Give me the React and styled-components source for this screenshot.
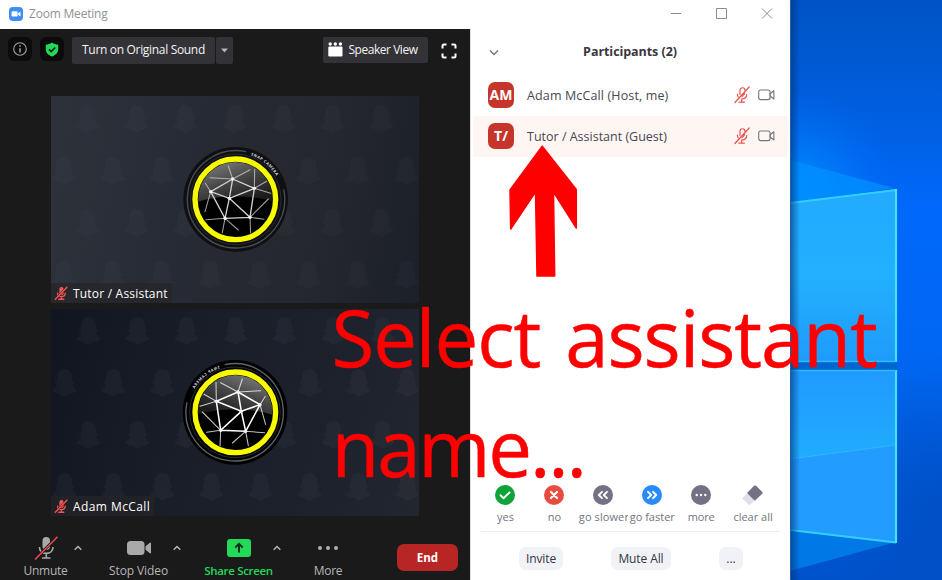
import React from "react";
import styled, { createGlobalStyle } from "styled-components";

const Global = createGlobalStyle`
  * { box-sizing: border-box; }
  body { margin: 0; overflow: hidden; background: #fff; }
  body, button { font-family: "Open Sans", "Noto Sans", sans-serif; }
  button { border: 0; padding: 0; margin: 0; background: none; color: inherit; }
  svg { display: block; flex: none; }
`;

const Desktop = styled.div`
  position: relative;
  display: flex;
  width: 942px;
  height: 580px;
  overflow: hidden;
`;

const Text = styled.span`
  font-size: ${(p) => p.$size || 12}px;
  font-weight: ${(p) => p.$weight || 400};
  letter-spacing: ${(p) => p.$spacing || 0}px;
  line-height: 16px;
  white-space: nowrap;
`;

const AppWindow = styled.div`
  display: flex;
  flex-direction: column;
  width: 790px;
  height: 580px;
  background: #fff;
`;

const TitleBar = styled.header`
  display: flex;
  align-items: center;
  height: 29px;
  padding: 0 17px 2px 9px;
  gap: 6px;
  color: #929292;
`;

const WindowControls = styled.div`
  display: flex;
  align-items: center;
  gap: 34px;
  margin-left: auto;
`;

const Body = styled.div`
  display: flex;
  flex: 1;
`;

const MeetingPane = styled.section`
  display: flex;
  flex-direction: column;
  width: 470px;
  background: #1a1a1a;
`;

const MeetingTop = styled.div`
  display: flex;
  align-items: flex-start;
  height: 67px;
  padding: 8px 12px 0 8px;
  color: #f2f2f2;
`;

const SquareButton = styled.button`
  display: grid;
  place-items: center;
  width: 24px;
  height: 24px;
  margin-right: 8px;
  border-radius: 6px;
  background: #0b0b0b;
`;

const GreyButton = styled.button`
  display: flex;
  align-items: center;
  justify-content: center;
  width: ${(p) => p.$width}px;
  height: ${(p) => p.$height || 27}px;
  margin-right: ${(p) => p.$after || 0}px;
  padding: 0 ${(p) => p.$shift || 0}px 1px 0;
  gap: 5px;
  border-radius: 2px;
  background: #323237;
  color: #f4f4f4;
`;

const TopRight = styled.div`
  display: flex;
  align-items: flex-start;
  margin-left: auto;
`;

const FullScreen = styled.button`
  display: grid;
  place-items: center;
  width: 18px;
  height: 28px;
`;

const Videos = styled.div`
  display: flex;
  flex-direction: column;
  gap: 6px;
  padding-left: 51px;
`;

const Tile = styled.div`
  position: relative;
  width: 368px;
  height: 207px;
  background: ${(p) =>
    p.$dark
      ? "linear-gradient(105deg, #10151f 0%, #191e29 40%, #1c212c 70%, #22262f 100%)"
      : "linear-gradient(100deg, #2e323b 0%, #272b35 35%, #25272e 72%, #1b2029 100%)"};
`;

const NameTag = styled.div`
  position: absolute;
  left: 0;
  bottom: 0;
  display: flex;
  align-items: center;
  gap: 5px;
  width: ${(p) => p.$width}px;
  height: 20px;
  padding: 1px 0 0 3px;
  background: rgba(38, 38, 40, 0.72);
  color: #fff;
`;

const Controls = styled.div`
  display: flex;
  align-items: flex-start;
  height: 64px;
  padding: 20px 0 0 20px;
`;

const ControlGroup = styled.div`
  display: flex;
  align-items: flex-start;
  margin-right: ${(p) => p.$after}px;
`;

const Control = styled.button`
  display: flex;
  flex-direction: column;
  align-items: center;
  gap: 3px;
  width: ${(p) => p.$width}px;
  color: ${(p) => (p.$green ? "#23d959" : "#b6b6b6")};
`;

const Caret = styled.button`
  display: flex;
  justify-content: center;
  width: ${(p) => p.$width}px;
  padding-top: 9px;
`;

const EndButton = styled.button`
  width: 61px;
  height: 27px;
  margin: 8px 12px 0 auto;
  padding-bottom: 2px;
  border-radius: 7px;
  background: #b82525;
  color: #fff;
`;

const Panel = styled.aside`
  display: flex;
  flex-direction: column;
  width: 320px;
  border-left: 1px solid #dedee2;
  background: #fff;
  color: #47474f;
`;

const PanelHeader = styled.div`
  display: grid;
  grid-template-columns: 46px 1fr 47px;
  align-items: center;
  height: 46px;
  justify-items: center;
  color: #37373d;
`;

const Row = styled.div`
  display: flex;
  align-items: center;
  height: 41px;
  margin: 0 2px;
  padding: 0 13px 0 15px;
  background: ${(p) => (p.$active ? "#fff6f3" : "#fff")};
`;

const Avatar = styled.div`
  display: grid;
  place-items: center;
  width: 26px;
  height: 26px;
  margin: 0 13px 2px 0;
  border-radius: 7px;
  background: #c5352b;
  color: #fff;
`;

const RowIcons = styled.div`
  display: flex;
  align-items: center;
  gap: 8px;
  margin: 0 0 2px auto;
`;

const Reactions = styled.div`
  display: flex;
  height: 47px;
  margin: auto 10px 0 9.5px;
  border-bottom: 1px solid #ededf1;
  color: #747482;
`;

const Reaction = styled.button`
  display: flex;
  flex-direction: column;
  align-items: center;
  gap: 4px;
  width: ${(p) => p.$width || 49}px;
`;

const ReactionLabel = styled(Text)`
  max-width: 50px;
  padding-left: 1px;
  overflow: hidden;
`;

const PanelFooter = styled.div`
  display: flex;
  height: 48px;
  padding: 15px 47px 0 48px;
  justify-content: space-between;
`;

const FooterButton = styled.button`
  display: flex;
  justify-content: center;
  align-items: center;
  width: ${(p) => p.$width}px;
  height: 23px;
  border-radius: 7px;
  background: #f1f2f7;
  color: #35353d;
`;

const Annotation = styled.div`
  position: absolute;
  left: 331.5px;
  top: 282px;
  display: flex;
  flex-direction: column;
  color: #f00;
  pointer-events: none;
`;

const AnnotationLine = styled.span`
  font-size: 78px;
  line-height: 110px;
  letter-spacing: ${(p) => p.$spacing}px;
  word-spacing: 6px;
  white-space: nowrap;
  -webkit-text-stroke: 0.5px #f00;
`;

const Arrow = styled.svg`
  position: absolute;
  left: 507px;
  top: 143.5px;
`;

const MutedLine = () => (
  <svg width="16" height="18" viewBox="0 0 16 18" fill="none" stroke="#e5534c" strokeWidth="1.2" strokeLinecap="round">
    <path d="M6 8.500V4.300C6 .900 11 .900 11 4.300M10.700 7.500 8 10.500" />
    <path d="M3.400 8c0 1.300.3 2.200.9 3M12.700 8.500c0 2.600-2 4.300-5 4.500v3M5 16.200h5.400" />
    <path d="M15.200 1 .900 16.500" />
  </svg>
);

const CameraLine = () => (
  <svg width="17" height="12" viewBox="0 0 17 12" fill="none" stroke="#74747f" strokeWidth="1.1" strokeLinejoin="round">
    <rect x=".7" y="1" width="11.4" height="9.6" rx="2" />
    <path d="m12.100 4.800 3.800-3v8.200l-3.800-3z" />
  </svg>
);

const MutedSolid = () => (
  <svg width="14" height="15" viewBox="0 0 14 15" fill="none" stroke="#f25555" strokeLinecap="round">
    <path d="M7.500 3v4.200" strokeWidth="4.200" />
    <path d="M3.600 7.200c0 2 1.400 3.400 3.800 3.400S11.200 9.200 11.200 7.200M7.400 10.800V13M4.800 13.300h5" strokeWidth="1.400" />
    <path d="M12.900 1.300 1.300 13.300" stroke="#3a2326" strokeWidth="2" />
    <path d="M12.900 1.300 1.300 13.300" strokeWidth="1.300" />
  </svg>
);

const CaretUp = () => (
  <svg width="8" height="6" viewBox="0 0 8 6" fill="none" stroke="#b5b5b5" strokeWidth="1.500">
    <path d="M.7 4.700 4 1.500l3.300 3.200" />
  </svg>
);

const spokes = [
  "M218 147 205 108", "M218 147 270 119", "M218 147 150 143", "M152 185 136 160", "M152 185 135 245",
  "M283 175 284 118", "M283 175 332 190", "M283 175 320 154", "M270 262 325 207", "M270 262 312 268",
  "M195 265 138 269", "M195 265 187 308", "M195 265 235 300", "M270 262 272 312",
];

const nodes = [[218, 147], [152, 185], [283, 175], [208, 205], [195, 265], [270, 262]];

const edges =
  "M218 147 152 185 208 205ZM218 147 283 175 208 205M152 185 195 265 208 205 270 262 283 175M195 265 270 262";

function Lens({ id, transform, dim }) {
  return (
    <g transform={transform}>
      <defs>
        <linearGradient id={`${id}-glass`} x1=".25" y1="0" x2=".6" y2="1">
          <stop offset="0" stopColor="#7a7a7a" />
          <stop offset=".3" stopColor="#454545" />
          <stop offset=".6" stopColor="#1c1c1c" />
        </linearGradient>
        <clipPath id={`${id}-clip`}><circle cx="226" cy="208" r="112" /></clipPath>
      </defs>
      <circle cx="227" cy="208" r="157" fill={dim ? "#0f1013" : "#020203"} />
      <path d="M258 65A146 146 0 1 0 371 178" fill="none" stroke={dim ? "#4b4d50" : "#606468"} strokeWidth="4" />
      <circle cx="227" cy="208" r="136" fill="none" stroke="#292a2c" strokeWidth="3" />
      <g clipPath={`url(#${id}-clip)`}>
        <circle cx="226" cy="208" r="112" fill={`url(#${id}-glass)`} />
        <path d="M100 222C150 196 275 190 350 218V340H100Z" fill="#000" />
        <g fill="none" stroke={dim ? "#d0d0d0" : "#fff"} strokeLinecap="round">
          <path d={edges} strokeWidth={dim ? 4 : 4.6} />
          {spokes.map((d) => <path key={d} d={d} strokeWidth="3.200" opacity=".75" />)}
        </g>
        {nodes.map(([x, y]) => <circle key={x} cx={x} cy={y} r="5" fill="#f5f5f5" />)}
      </g>
      <circle cx="226" cy="208" r="121" fill="none" stroke="#f8fa00" strokeWidth="16" />
      <path id={`${id}-arc`} d="M272 76A140 140 0 0 1 361 166" fill="none" />
      <text fontFamily="Open Sans" fontWeight="700" fontSize="12" letterSpacing="1.500" fill="#d5d5d5">
        <textPath href={`#${id}-arc`}>SNAP CAMERA</textPath>
      </text>
    </g>
  );
}

function Snapshot({ id, dim, transform }) {
  return (
    <svg width="368" height="207" viewBox="0 0 368 207">
      <defs>
        <path
          id={`${id}-ghost`}
          fill={dim ? "#8c93ad" : "#a9a2ad"}
          d="M12.500 0c4.700 0 7.500 3.700 7.500 8.600v3.700c1 .9 2.500.2 2.300 1.300-.2 1-2 1.300-2 2.300 0 1.900 2.200 4.400 4.200 5.200.8.400-.4 2-2.800 2.300-.7 1.800-2.700.4-4.500 1.400-1.500.9-2.500 2.700-4.700 2.700s-3.200-1.800-4.700-2.700c-1.800-1-3.800.4-4.500-1.400C1 23.100-.3 21.500.5 21.100c2-.8 4.200-3.300 4.200-5.200 0-1-1.800-1.300-2-2.300-.2-1.100 1.300-.4 2.300-1.300V8.600C5 3.700 7.800 0 12.500 0Z"
        />
        <pattern id={`${id}-ghosts`} width="49" height="104" patternUnits="userSpaceOnUse" x={dim ? 21 : 22} y={dim ? 9 : 8}>
          <use href={`#${id}-ghost`} x="3" y="0" />
          <use href={`#${id}-ghost`} x="28" y="52" />
          <use href={`#${id}-ghost`} x="-21" y="52" />
        </pattern>
      </defs>
      <rect width="368" height="207" fill={`url(#${id}-ghosts)`} opacity={dim ? 0.035 : 0.05} />
      <Lens id={id} dim={dim} transform={transform} />
    </svg>
  );
}

const Wallpaper = () => (
  <svg width="152" height="580" viewBox="0 0 152 580">
    <defs>
      <linearGradient id="sky" x1="0" y1="0" x2="0" y2="1">
        <stop offset="0" stopColor="#0053c4" />
        <stop offset=".2" stopColor="#005fe0" />
        <stop offset=".36" stopColor="#0068fb" />
        <stop offset=".6" stopColor="#0067f4" />
        <stop offset=".8" stopColor="#005bdc" />
        <stop offset="1" stopColor="#0052cb" />
      </linearGradient>
      <linearGradient id="pane" x1="0" y1="0" x2="0" y2="1">
        <stop offset="0" stopColor="#22aaff" />
        <stop offset=".5" stopColor="#22b0ff" />
        <stop offset="1" stopColor="#1f9bfb" />
      </linearGradient>
      <linearGradient id="paneLow" x1="0" y1="0" x2="0" y2="1">
        <stop offset="0" stopColor="#209aff" />
        <stop offset=".5" stopColor="#20acff" />
      </linearGradient>
      <radialGradient id="halo" gradientUnits="userSpaceOnUse" cx="0" cy="195" r="110">
        <stop offset="0" stopColor="#009cff" stopOpacity=".9" />
        <stop offset="1" stopColor="#0070ff" stopOpacity="0" />
      </radialGradient>
      <radialGradient id="shade" gradientUnits="userSpaceOnUse" cx="152" cy="500" r="130">
        <stop offset="0" stopColor="#0048b4" stopOpacity=".45" />
        <stop offset="1" stopColor="#0048b4" stopOpacity="0" />
      </radialGradient>
      <linearGradient id="edge" x1="0" x2="1">
        <stop offset="0" stopColor="#00337a" stopOpacity=".65" />
        <stop offset="1" stopColor="#00337a" stopOpacity="0" />
      </linearGradient>
    </defs>
    <rect width="152" height="580" fill="url(#sky)" />
    <rect width="152" height="580" fill="url(#halo)" />
    <rect width="152" height="580" fill="url(#shade)" />
    <path d="M0 160 104 188 0 204Z" fill="#008eff" opacity=".8" />
    <path d="M0 529 106 542 0 571Z" fill="#0084ed" opacity=".75" />
    <path d="M0 362H107V370H0Z" fill="#0065cf" />
    <path d="M0 203 107 189V362H0Z" fill="url(#pane)" />
    <path d="M0 370H107V543L0 529Z" fill="url(#paneLow)" />
    <path d="M0 459 106 445V542L0 529Z" fill="#239cff" />
    <path d="M0 459 106 445" stroke="#34c2ff" strokeDasharray="2 1" />
    <path d="M0 203 106 190M0 530 106 542.500" stroke="#33cfff" strokeWidth="2" />
    <path d="M106 189V362M106 370V543" stroke="#43e2ff" strokeWidth="2.200" />
    <path d="M0 361.500H106M0 370.500H106" stroke="#2cbcff" strokeWidth="1.300" />
    <rect width="10" height="580" fill="url(#edge)" />
    <rect width="1" height="580" fill="#1c62a8" />
  </svg>
);

const Badge = ({ color, children }) => (
  <svg width="20" height="20" viewBox="0 0 20 20" fill="none" stroke="#fff" strokeWidth="1.900" strokeLinecap="round" strokeLinejoin="round">
    <circle cx="10" cy="10" r="10" fill={color} stroke="none" />
    {children}
  </svg>
);

const people = [
  { initials: "AM", name: "Adam McCall (Host, me)", spacing: 0.13 },
  { initials: "T/", name: "Tutor / Assistant (Guest)", active: true },
];

export default function App() {
  return (
    <Desktop>
      <Global />
      <AppWindow>
        <TitleBar>
          <svg width="14" height="14" viewBox="0 0 14 14">
            <rect width="14" height="14" rx="4" fill="#3f8df5" />
            <rect x="2.600" y="4.200" width="6" height="5.400" rx="1.200" fill="#fff" />
            <path d="m9.100 6.200 2.400-1.700v4.900L9.100 7.700z" fill="#fff" />
          </svg>
          <Text $spacing={-0.2}>Zoom Meeting</Text>
          <WindowControls>
            <svg width="12" height="12" viewBox="0 0 12 12" stroke="#8b8b8b"><path d="M1 5.500h10" /></svg>
            <svg width="11" height="12" viewBox="0 0 11 12" stroke="#8b8b8b" fill="none"><path d="M.5 .5h10v10H.5z" /></svg>
            <svg width="12" height="12" viewBox="0 0 12 12" stroke="#8b8b8b"><path d="m1 .500 10 10M11 .500 1 10.500" /></svg>
          </WindowControls>
        </TitleBar>
        <Body>
          <MeetingPane>
            <MeetingTop>
              <SquareButton>
                <svg width="14" height="14" viewBox="0 0 14 14" fill="none" stroke="#a5a5a5" strokeWidth="1.100">
                  <circle cx="7" cy="7" r="6.300" />
                  <path d="M7 6.200v4.300M7 3.300v1.500" strokeWidth="1.500" />
                </svg>
              </SquareButton>
              <SquareButton>
                <svg width="14" height="15" viewBox="0 0 14 15">
                  <path d="M7 .5c2 1.500 4 2 6.200 2.200v4.500c0 3.500-2.500 6-6.200 7.300C3.300 13.200.8 10.700.8 7.200V2.700C3 2.500 5 2 7 .5Z" fill="#23d959" />
                  <path d="m4 7.400 2.200 2.200 4-4.200" fill="none" stroke="#0d1b10" strokeWidth="1.500" />
                </svg>
              </SquareButton>
              <GreyButton $width={143} $after={1}>
                <Text $spacing={-0.32}>Turn on Original Sound</Text>
              </GreyButton>
              <GreyButton $width={17}>
                <svg width="7" height="5" viewBox="0 0 7 5"><path d="M0 .5h7L3.500 4.500z" fill="#b5b5b5" /></svg>
              </GreyButton>
              <TopRight>
                <GreyButton $width={105} $height={26} $after={12} $shift={5}>
                  <svg width="15" height="15" viewBox="0 0 15 15" fill="#fff">
                    <circle cx="2.200" cy="2" r="1.700" /><circle cx="7.300" cy="2" r="1.700" /><circle cx="12.400" cy="2" r="1.700" />
                    <rect x=".3" y="4.600" width="14.200" height="10" rx="1" />
                  </svg>
                  <Text $spacing={-0.46}>Speaker View</Text>
                </GreyButton>
                <FullScreen>
                  <svg width="16" height="16" viewBox="0 0 16 16" fill="none" stroke="#fff" strokeWidth="2">
                    <path d="M1.500 5.500V3Q1.500 1.500 3 1.500h2.500M10.500 1.500H13q1.500 0 1.500 1.500v2.500M14.500 10.500V13q0 1.500-1.500 1.500h-2.500M5.500 14.500H3Q1.500 14.500 1.500 13v-2.500" />
                  </svg>
                </FullScreen>
              </TopRight>
            </MeetingTop>
            <Videos>
              <Tile>
                <Snapshot id="tutor" dim transform="translate(109 34) scale(.33333)" />
                <NameTag $width={121}><MutedSolid /><Text $spacing={0.2}>Tutor / Assistant</Text></NameTag>
              </Tile>
              <Tile $dark>
                <Snapshot id="adam" transform="translate(109 31) scale(.33333) translate(452 9) scale(-1 1)" />
                <NameTag $width={103}><MutedSolid /><Text $spacing={0.42}>Adam McCall</Text></NameTag>
              </Tile>
            </Videos>
            <Controls>
              <ControlGroup $after={20}>
                <Control $width={51}>
                  <svg width="26" height="24" viewBox="0 0 26 24" fill="none" stroke="#a9a9a9">
                    <rect x="9.500" y="1" width="7.500" height="13" rx="3.700" fill="#a9a9a9" stroke="none" />
                    <path d="M6.500 11c0 4 2.700 6.400 6.700 6.400S20 15 20 11M13.300 17.500v4M9 22h8.500" strokeWidth="1.600" />
                    <path d="M24.500 .500 2 23.500" stroke="#1a1a1a" strokeWidth="2.800" />
                    <path d="M24.500 .800 2 23.500" stroke="#e8474a" strokeWidth="1.600" />
                  </svg>
                  <Text $spacing={-0.3}>Unmute</Text>
                </Control>
                <Caret $width={14}><CaretUp /></Caret>
              </ControlGroup>
              <ControlGroup $after={23}>
                <Control $width={67}>
                  <svg width="26" height="24" viewBox="0 0 26 24" fill="#a9a9a9">
                    <rect x="1" y="5" width="17.500" height="14" rx="3.500" />
                    <path d="m19.500 10.200 4-3.300q1.500-1 1.500.5v9.200q0 1.500-1.500.5l-4-3.300z" />
                  </svg>
                  <Text $spacing={-0.1}>Stop Video</Text>
                </Control>
                <Caret $width={9}><CaretUp /></Caret>
              </ControlGroup>
              <ControlGroup $after={34}>
                <Control $green $width={69}>
                  <svg width="24" height="24" viewBox="0 0 24 24">
                    <rect y="3" width="24" height="18" rx="3" fill="#23d959" />
                    <path d="M12 16.500V8.500M8.300 11.500 12 7.800l3.700 3.700" fill="none" stroke="#12321b" strokeWidth="2" />
                  </svg>
                  <Text $size={11.5} $weight={600} $spacing={-0.34}>Share Screen</Text>
                </Control>
                <Caret $width={7}><CaretUp /></Caret>
              </ControlGroup>
              <Control $width={28}>
                <svg width="22" height="24" viewBox="0 0 22 24" fill="#b0b0b0">
                  <circle cx="3" cy="12" r="2" /><circle cx="11" cy="12" r="2" /><circle cx="19" cy="12" r="2" />
                </svg>
                <Text $spacing={-0.3}>More</Text>
              </Control>
              <EndButton><Text $weight={700} $size={11.5}>End</Text></EndButton>
            </Controls>
          </MeetingPane>
          <Panel>
            <PanelHeader>
              <svg width="10" height="7" viewBox="0 0 10 7" fill="none" stroke="#777781" strokeWidth="1.500"><path d="m1 1.500 4 4 4-4" /></svg>
              <Text $size={12.5} $weight={700} $spacing={-0.06}>Participants (2)</Text>
            </PanelHeader>
            {people.map((p) => (
              <Row key={p.initials} $active={p.active}>
                <Avatar><Text $size={14} $weight={700}>{p.initials}</Text></Avatar>
                <Text $size={12.5} $spacing={p.spacing}>{p.name}</Text>
                <RowIcons><MutedLine /><CameraLine /></RowIcons>
              </Row>
            ))}
            <Reactions>
              <Reaction>
                <Badge color="#0ea438"><path d="m5.500 10.300 3 2.900 6-5.700" /></Badge>
                <ReactionLabel $size={11}>yes</ReactionLabel>
              </Reaction>
              <Reaction>
                <Badge color="#e84b3f"><path d="m7 7 6 6m0-6-6 6" strokeWidth="2.200" /></Badge>
                <ReactionLabel $size={11}>no</ReactionLabel>
              </Reaction>
              <Reaction>
                <Badge color="#737184"><path d="M9 6.800 5.800 10 9 13.200M14 6.800 10.800 10l3.200 3.200" /></Badge>
                <ReactionLabel $size={11} $spacing={0.1}>go slower</ReactionLabel>
              </Reaction>
              <Reaction>
                <Badge color="#2a8bf8"><path d="M6 6.800 9.200 10 6 13.200M11 6.800l3.200 3.200L11 13.200" /></Badge>
                <ReactionLabel $size={11}>go faster</ReactionLabel>
              </Reaction>
              <Reaction>
                <Badge color="#737184">
                  <g fill="#fff" stroke="none"><circle cx="5.700" cy="10" r="1.200" /><circle cx="10" cy="10" r="1.200" /><circle cx="14.300" cy="10" r="1.200" /></g>
                </Badge>
                <ReactionLabel $size={11} $spacing={-0.2}>more</ReactionLabel>
              </Reaction>
              <Reaction $width={55}>
                <svg width="21" height="20" viewBox="0 0 21 20">
                  <path d="m5.300 8 7.500 7-4.300 4.400q-1 .8-2 0L.900 14.300q-.8-1 0-1.900z" fill="#dfe1e6" />
                  <path d="m12.100 .800q1-.8 2 0l6.200 6.100q.7.900 0 1.900l-7.500 6.900L5 8z" fill="#737184" />
                </svg>
                <ReactionLabel $size={11}>clear all</ReactionLabel>
              </Reaction>
            </Reactions>
            <PanelFooter>
              <FooterButton $width={44}><Text $spacing={-0.1}>Invite</Text></FooterButton>
              <FooterButton $width={60}><Text $spacing={-0.1}>Mute All</Text></FooterButton>
              <FooterButton $width={24}><Text>...</Text></FooterButton>
            </PanelFooter>
          </Panel>
        </Body>
      </AppWindow>
      <Wallpaper />
      <Arrow width="72" height="135" viewBox="0 0 72 135">
        <path d="M35.200 2.300 3 46 3.700 85 28.500 48 30 132H47.700L46.500 48 69.300 84V45.500Z" fill="red" stroke="red" strokeWidth="1.500" strokeLinejoin="round" />
      </Arrow>
      <Annotation>
        <AnnotationLine $spacing={-1.1}>Select assistant</AnnotationLine>
        <AnnotationLine $spacing={-2.2}>name...</AnnotationLine>
      </Annotation>
    </Desktop>
  );
}
